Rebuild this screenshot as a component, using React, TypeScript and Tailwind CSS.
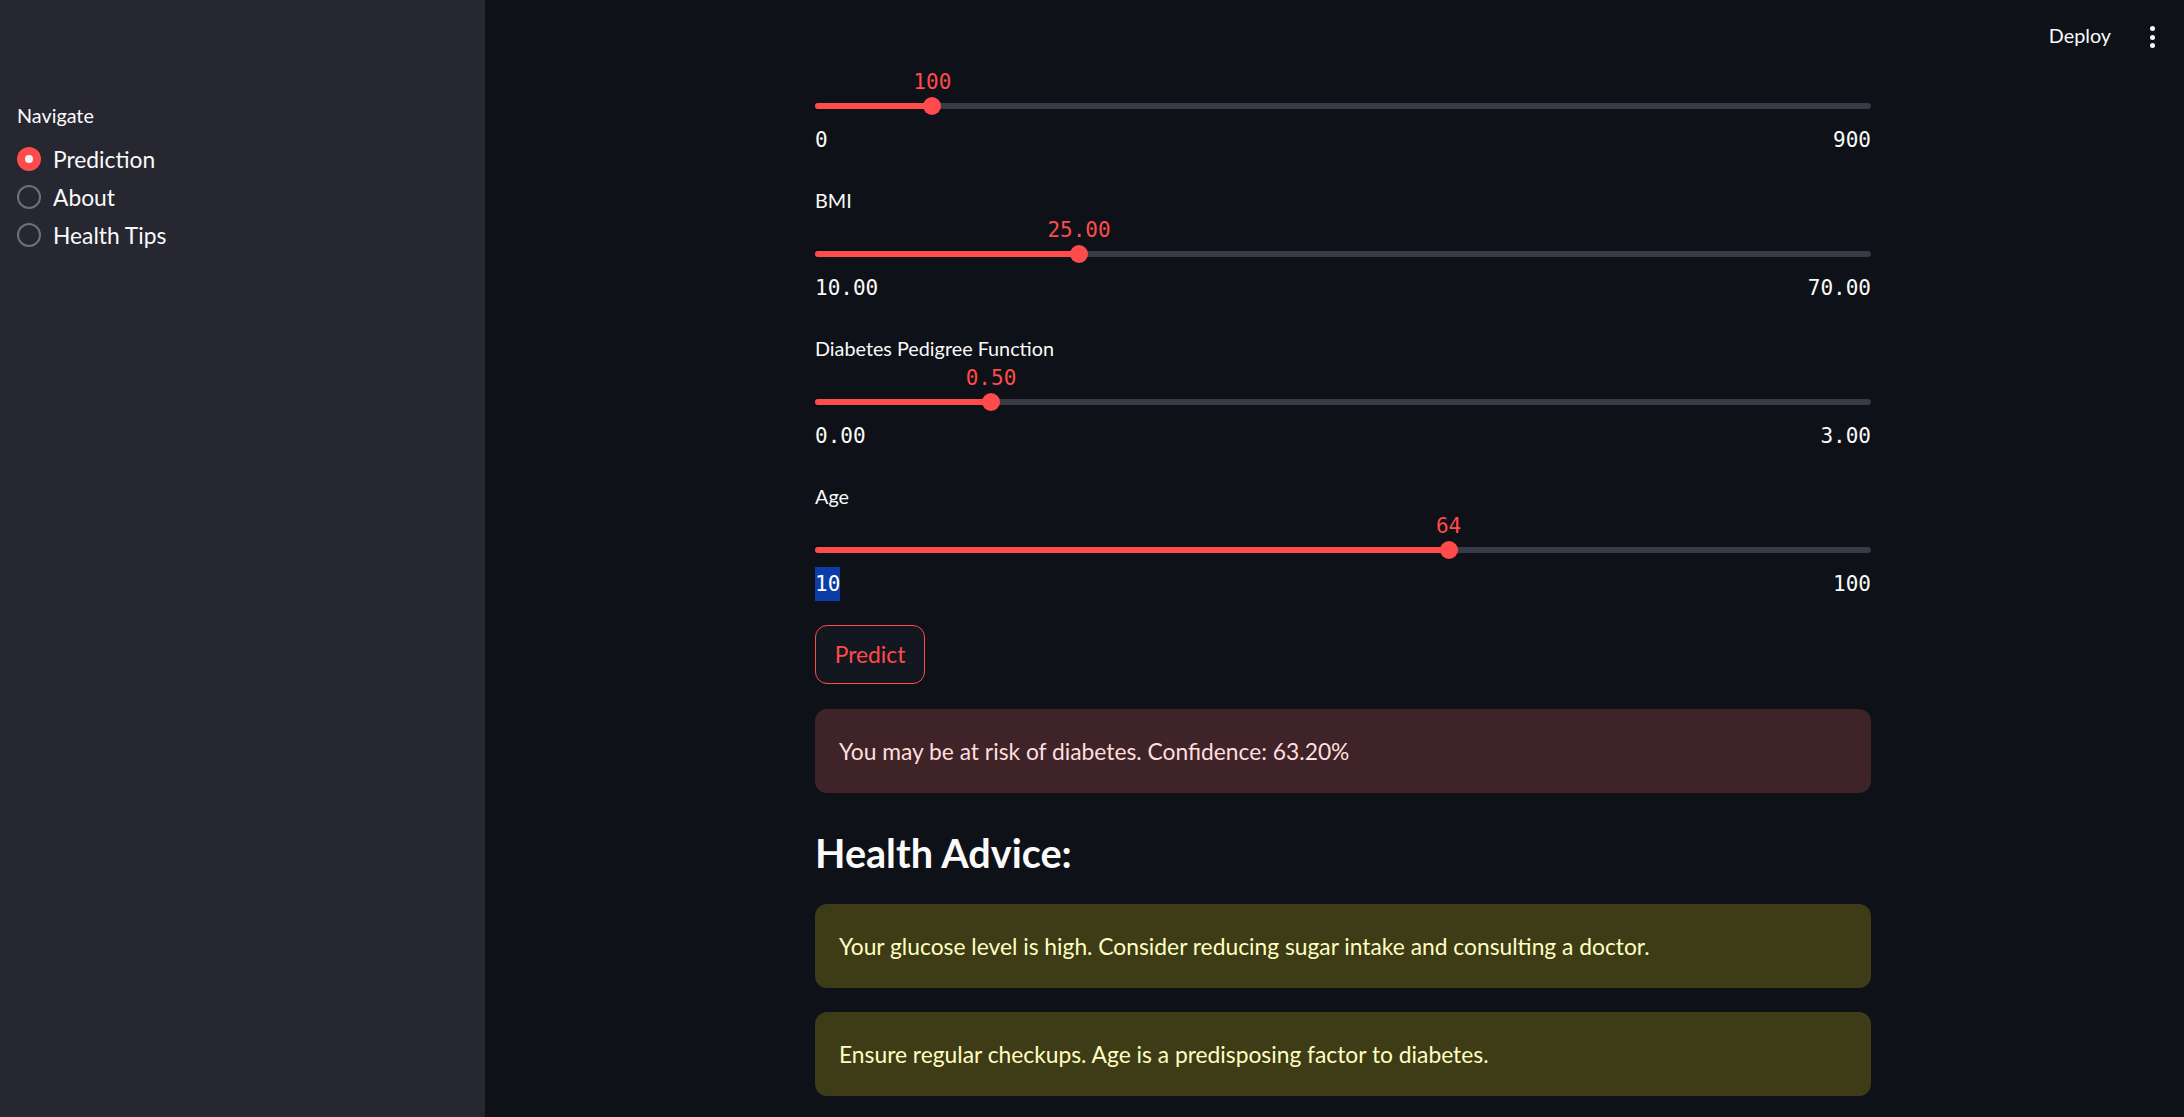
import React from "react";

type SliderDef = {
  label: string | null;
  value: number;
  min: number;
  max: number;
  decimals: number;
  highlightMin?: boolean;
};

const sliders: SliderDef[] = [
  { label: null, value: 100, min: 0, max: 900, decimals: 0 },
  { label: "BMI", value: 25, min: 10, max: 70, decimals: 2 },
  { label: "Diabetes Pedigree Function", value: 0.5, min: 0, max: 3, decimals: 2 },
  { label: "Age", value: 64, min: 10, max: 100, decimals: 0, highlightMin: true },
];

const mono = "font-['DejaVu_Sans_Mono','Liberation_Mono',monospace]";

function Slider({ s, first }: { s: SliderDef; first: boolean }) {
  const pct = ((s.value - s.min) / (s.max - s.min)) * 100;
  const fmt = (v: number) => v.toFixed(s.decimals);
  return (
    <div className={`flex flex-col ${first ? "" : "mt-[28px]"}`}>
      {s.label && (
        <div className="h-[30px] text-[19.8px] leading-[30px] text-[#fafafa]">{s.label}</div>
      )}
      <div className="relative h-[30px]">
        <span
          className={`absolute top-0 -translate-x-1/2 text-[21px] leading-[30px] text-[#ff4b4b] ${mono}`}
          style={{ left: `${pct}%` }}
        >
          {fmt(s.value)}
        </span>
      </div>
      <div className="relative flex h-[18px] items-center">
        <div className="h-[6px] w-full rounded-full bg-[#383b45]">
          <div className="h-full rounded-full bg-[#ff4b4b]" style={{ width: `${pct}%` }} />
        </div>
        <div
          className="absolute top-0 h-[18px] w-[18px] -translate-x-1/2 rounded-full bg-[#ff4b4b]"
          style={{ left: `${pct}%` }}
        />
      </div>
      <div className={`mt-[8px] flex h-[34px] justify-between text-[21px] leading-[34px] text-[#fafafa] ${mono}`}>
        <span className={s.highlightMin ? "bg-[#0b3ca8] text-white" : ""}>{fmt(s.min)}</span>
        <span>{fmt(s.max)}</span>
      </div>
    </div>
  );
}

function Radio({ label, selected }: { label: string; selected?: boolean }) {
  return (
    <div className="flex h-[38px] items-center gap-[12px]">
      {selected ? (
        <span className="flex h-[24px] w-[24px] items-center justify-center rounded-full bg-[#ff4b4b]">
          <span className="h-[8px] w-[8px] rounded-full bg-[#f0f0f5]" />
        </span>
      ) : (
        <span className="h-[24px] w-[24px] rounded-full border-2 border-[#6e7079]" />
      )}
      <span className="text-[22.8px] text-[#fafafa]">{label}</span>
    </div>
  );
}

export default function App() {
  return (
    <div className="flex h-[1117px] w-full overflow-hidden bg-[#0e1117] font-['Lato','Noto_Sans',sans-serif] text-[#fafafa]">
      <aside className="flex w-[485px] shrink-0 flex-col bg-[#262730] pl-[17px] pt-[98px]">
        <div className="h-[34px] text-[19.8px] leading-[34px] text-[#fafafa]">Navigate</div>
        <div className="mt-[8px] flex flex-col">
          <Radio label="Prediction" selected />
          <Radio label="About" />
          <Radio label="Health Tips" />
        </div>
      </aside>
      <main className="flex min-w-0 flex-1 flex-col">
        <header className="flex h-[67px] shrink-0 items-start justify-end pr-[29px] pt-[20px]">
          <span className="text-[19.8px] leading-[30px] text-[#fafafa]">Deploy</span>
          <span className="ml-[39px] mt-[6px] flex flex-col items-center gap-[3.5px]">
            <span className="h-[5px] w-[5px] rounded-full bg-[#fafafa]" />
            <span className="h-[5px] w-[5px] rounded-full bg-[#fafafa]" />
            <span className="h-[5px] w-[5px] rounded-full bg-[#fafafa]" />
          </span>
        </header>
        <div className="ml-[330px] flex w-[1056px] flex-col">
          {sliders.map((s, i) => (
            <Slider key={i} s={s} first={i === 0} />
          ))}
          <button className="mt-[23.5px] h-[59px] w-[110px] rounded-[12px] border border-[#ff4b4b] bg-[#131720] text-[22.8px] text-[#ff4b4b]">
            Predict
          </button>
          <div className="mt-[25px] rounded-[12px] bg-[#3e2328] px-[24px] py-[24px] text-[22.8px] leading-[36px] text-[#ffdede]">
            You may be at risk of diabetes. Confidence: 63.20%
          </div>
          <h3 className="mt-[35px] h-[50px] text-[39.6px] font-bold leading-[50px] text-[#fafafa]">Health Advice:</h3>
          <div className="mt-[26px] rounded-[12px] bg-[#3e3b17] px-[24px] py-[24px] text-[22.8px] leading-[36px] text-[#ffffc2]">
            Your glucose level is high. Consider reducing sugar intake and consulting a doctor.
          </div>
          <div className="mt-[24px] rounded-[12px] bg-[#3e3b17] px-[24px] py-[24px] text-[22.8px] leading-[36px] text-[#ffffc2]">
            Ensure regular checkups. Age is a predisposing factor to diabetes.
          </div>
        </div>
      </main>
    </div>
  );
}
